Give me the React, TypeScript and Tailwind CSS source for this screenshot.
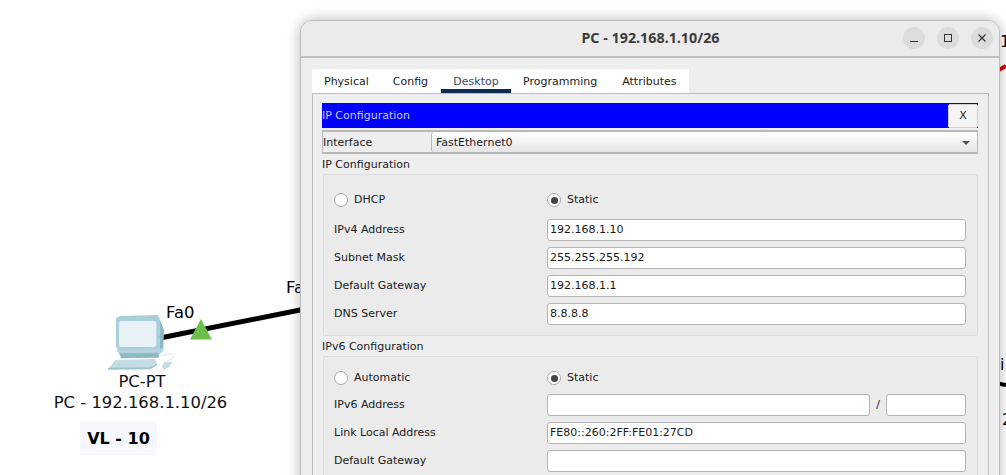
import React from "react";

const FONT = "font-['DejaVu_Sans',sans-serif]";

function Radio({ checked, label, width }: { checked?: boolean; label: string; width: string }) {
  return (
    <div className={`flex items-center ${width}`}>
      <span className="flex h-[14px] w-[14px] items-center justify-center rounded-full border border-[#a8a8a8] bg-white">
        {checked && <span className="h-[7px] w-[7px] rounded-full bg-[#444]" />}
      </span>
      <span className="ml-[6px]">{label}</span>
    </div>
  );
}

function Field({ value = "", className = "" }: { value?: string; className?: string }) {
  return (
    <div className={`flex h-[22px] items-center rounded-[3px] border border-[#b4b4b4] bg-white pl-[2px] ${className}`}>
      {value}
    </div>
  );
}

function Row({ label, value }: { label: string; value?: string }) {
  return (
    <div className="flex h-[28px] items-center">
      <span className="w-[213px] shrink-0">{label}</span>
      <Field value={value} className="w-[419px]" />
    </div>
  );
}

function PcIcon() {
  return (
    <svg width="110" height="75" viewBox="0 0 330 225" className="block">
      <path d="M48 40 L60 33 L172 30 L178 40 L180 138 L55 138 L48 125 Z" fill="#a9cfdb" />
      <rect x="57" y="48" width="112" height="78" rx="7" fill="#e8f1f5" />
      <path d="M178 40 L192 75 L190 125 L180 138 Z" fill="#8fb9c7" />
      <path d="M50 135 L180 132 L192 122 L190 138 L176 150 L60 152 Z" fill="#b6d4de" />
      <path d="M60 145 L176 143 L176 158 L62 160 Z" fill="#8fb9c7" />
      <path d="M46 165 L165 162 L172 178 L150 190 L25 192 Z" fill="#c3dde5" />
      <path d="M25 188 L150 187 L170 176 L172 180 L150 193 L24 194 Z" fill="#9cc3cf" />
      <path d="M192 172 L216 170 L208 186 L190 195 L186 186 Z" fill="#c3dde5" />
      <path d="M186 155 C205 142 226 145 222 156 C218 165 206 163 200 170" fill="none" stroke="#d6e6eb" strokeWidth="3" />
    </svg>
  );
}

export default function App() {
  return (
    <div className={`relative h-[475px] w-[1006px] overflow-hidden bg-white ${FONT} text-[#1a1a1a]`}>
      {/* network canvas */}
      <svg width="1006" height="475" className="absolute left-0 top-0">
        <line x1="160" y1="338" x2="310" y2="308" stroke="#000" strokeWidth="5" />
        <polygon points="201,319 212,339.5 190,339.5" fill="#6cbf4b" />
        <line x1="995" y1="72" x2="1006" y2="66" stroke="#d8000f" strokeWidth="4" />
        <line x1="995" y1="383" x2="1006" y2="385" stroke="#000" strokeWidth="4" />
      </svg>
      <div className="absolute left-[100px] top-[305px]">
        <PcIcon />
      </div>
      <span className="absolute left-[166px] top-[303px] text-[16.4px] leading-[20px] text-black">Fa0</span>
      <span className="absolute left-[286px] top-[278px] text-[16.4px] leading-[20px] text-black">Fa0</span>
      <div className="absolute left-[40px] top-[372px] w-[201px] text-center text-[16.4px] leading-[20px] text-[#111]">
        <div className="ml-[3px]">PC-PT</div>
        <div className="mt-[1px] whitespace-nowrap">PC - 192.168.1.10/26</div>
      </div>
      <div className="absolute left-[80px] top-[422px] flex h-[33px] w-[77px] items-center justify-center bg-[#f7f8fe] text-[16px] font-bold text-black">
        VL - 10
      </div>
      <span className="absolute left-[1000px] top-[32px] text-[16px] leading-[20px] text-black">1</span>
      <span className="absolute left-[1000px] top-[355px] text-[16px] leading-[20px] text-black">i</span>
      <span className="absolute left-[1002px] top-[410px] text-[16px] leading-[20px] text-black">2</span>

      {/* dialog window */}
      <div className="absolute left-[300px] top-[20px] h-[480px] w-[700px] overflow-hidden rounded-t-[12px] border border-[#bdbdbd] bg-[#eeeeee] text-[11px] shadow-[0_0_14px_rgba(0,0,0,0.28)]">
        <div className="flex h-[37px] items-center border-b-2 border-b-[#c0c0c0] bg-[#ebebeb] pb-[1px]">
          <div className="flex-1 pl-[97px] text-center font-['Noto_Sans',sans-serif] text-[14.3px] font-bold text-[#3c3c3c]">
            PC - 192.168.1.10/26
          </div>
          <div className="mr-[6px] flex gap-[12px]">
            <span className="flex h-[22px] w-[22px] items-center justify-center rounded-full bg-[#dcdcdc]">
              <svg width="10" height="10" viewBox="0 0 10 10"><path d="M1 8.5H9" stroke="#333" strokeWidth="1" /></svg>
            </span>
            <span className="flex h-[22px] w-[22px] items-center justify-center rounded-full bg-[#dcdcdc]">
              <svg width="10" height="10" viewBox="0 0 10 10"><rect x="1.5" y="1.5" width="7" height="7" fill="none" stroke="#333" /></svg>
            </span>
            <span className="flex h-[22px] w-[22px] items-center justify-center rounded-full bg-[#dcdcdc]">
              <svg width="10" height="10" viewBox="0 0 10 10"><path d="M1.5 1.5L8.5 8.5M8.5 1.5L1.5 8.5" stroke="#333" strokeWidth="1.2" /></svg>
            </span>
          </div>
        </div>

        <div className="px-[11px] pt-[11px]">
          {/* tabs */}
          <div className="flex h-[24px] w-[377px] items-stretch bg-white pl-[12px] text-[#222]">
            <span className="mr-[24px] pt-[5px]">Physical</span>
            <span className="mr-[13px] pt-[5px]">Config</span>
            <span className="mr-[12px] w-[70px] border-b-[4px] border-b-[#0d2a55] pt-[5px] text-center text-[#3a4a60]">Desktop</span>
            <span className="mr-[25px] pt-[5px]">Programming</span>
            <span className="pt-[5px]">Attributes</span>
          </div>

          {/* panel */}
          <div className="h-[400px] w-[677px] border border-[#bcbcbc] px-[9px] pt-[9px]">
            <div className="flex h-[25px] w-[656px] items-center justify-between bg-[#0000ff] text-[#c8c8ff]">
              <span className="pt-[1px]">IP Configuration</span>
              <span className="flex h-[24px] w-[30px] items-center justify-center rounded-[2px] border border-[#d0d0d0] bg-[#f4f4f4] pt-[1px] text-[#222]">X</span>
            </div>
            <div className="mt-[2px] flex h-[24px] w-[656px] border border-y-2 border-[#b8b8b8]">
              <span className="flex w-[108px] items-center pt-[2px]">Interface</span>
              <div className="flex flex-1 items-center justify-between rounded-[3px] border-l border-l-[#b8b8b8] bg-gradient-to-b from-[#ffffff] to-[#e6e6e6] pl-[4px] pr-[7px] pt-[2px]">
                <span>FastEthernet0</span>
                <span className="h-0 w-0 border-x-[4px] border-t-[4px] border-x-transparent border-t-[#555]" />
              </div>
            </div>

            <div className="mt-[2px] h-[18px] leading-[18px]">IP Configuration</div>
            <div className="ml-[1px] h-[162px] w-[655px] rounded-[2px] border border-[#dcdcdc] bg-[#ebebeb] px-[10px] pt-[11px]">
              <div className="flex h-[28px] items-center">
                <Radio label="DHCP" width="w-[213px]" />
                <Radio checked label="Static" width="" />
              </div>
              <div className="mt-[2px]">
                <Row label="IPv4 Address" value="192.168.1.10" />
                <Row label="Subnet Mask" value="255.255.255.192" />
                <Row label="Default Gateway" value="192.168.1.1" />
                <Row label="DNS Server" value="8.8.8.8" />
              </div>
            </div>

            <div className="h-[20px] leading-[22px]">IPv6 Configuration</div>
            <div className="ml-[1px] h-[130px] w-[655px] rounded-[2px] border border-[#dcdcdc] bg-[#ebebeb] px-[10px] pt-[8px]">
              <div className="flex h-[26px] items-center">
                <Radio label="Automatic" width="w-[213px]" />
                <Radio checked label="Static" width="" />
              </div>
              <div className="flex h-[28px] items-center">
                <span className="w-[213px] shrink-0">IPv6 Address</span>
                <Field className="w-[323px]" />
                <span className="w-[16px] text-center">/</span>
                <Field className="w-[80px]" />
              </div>
              <Row label="Link Local Address" value="FE80::260:2FF:FE01:27CD" />
              <Row label="Default Gateway" />
            </div>
          </div>
        </div>
      </div>
    </div>
  );
}
